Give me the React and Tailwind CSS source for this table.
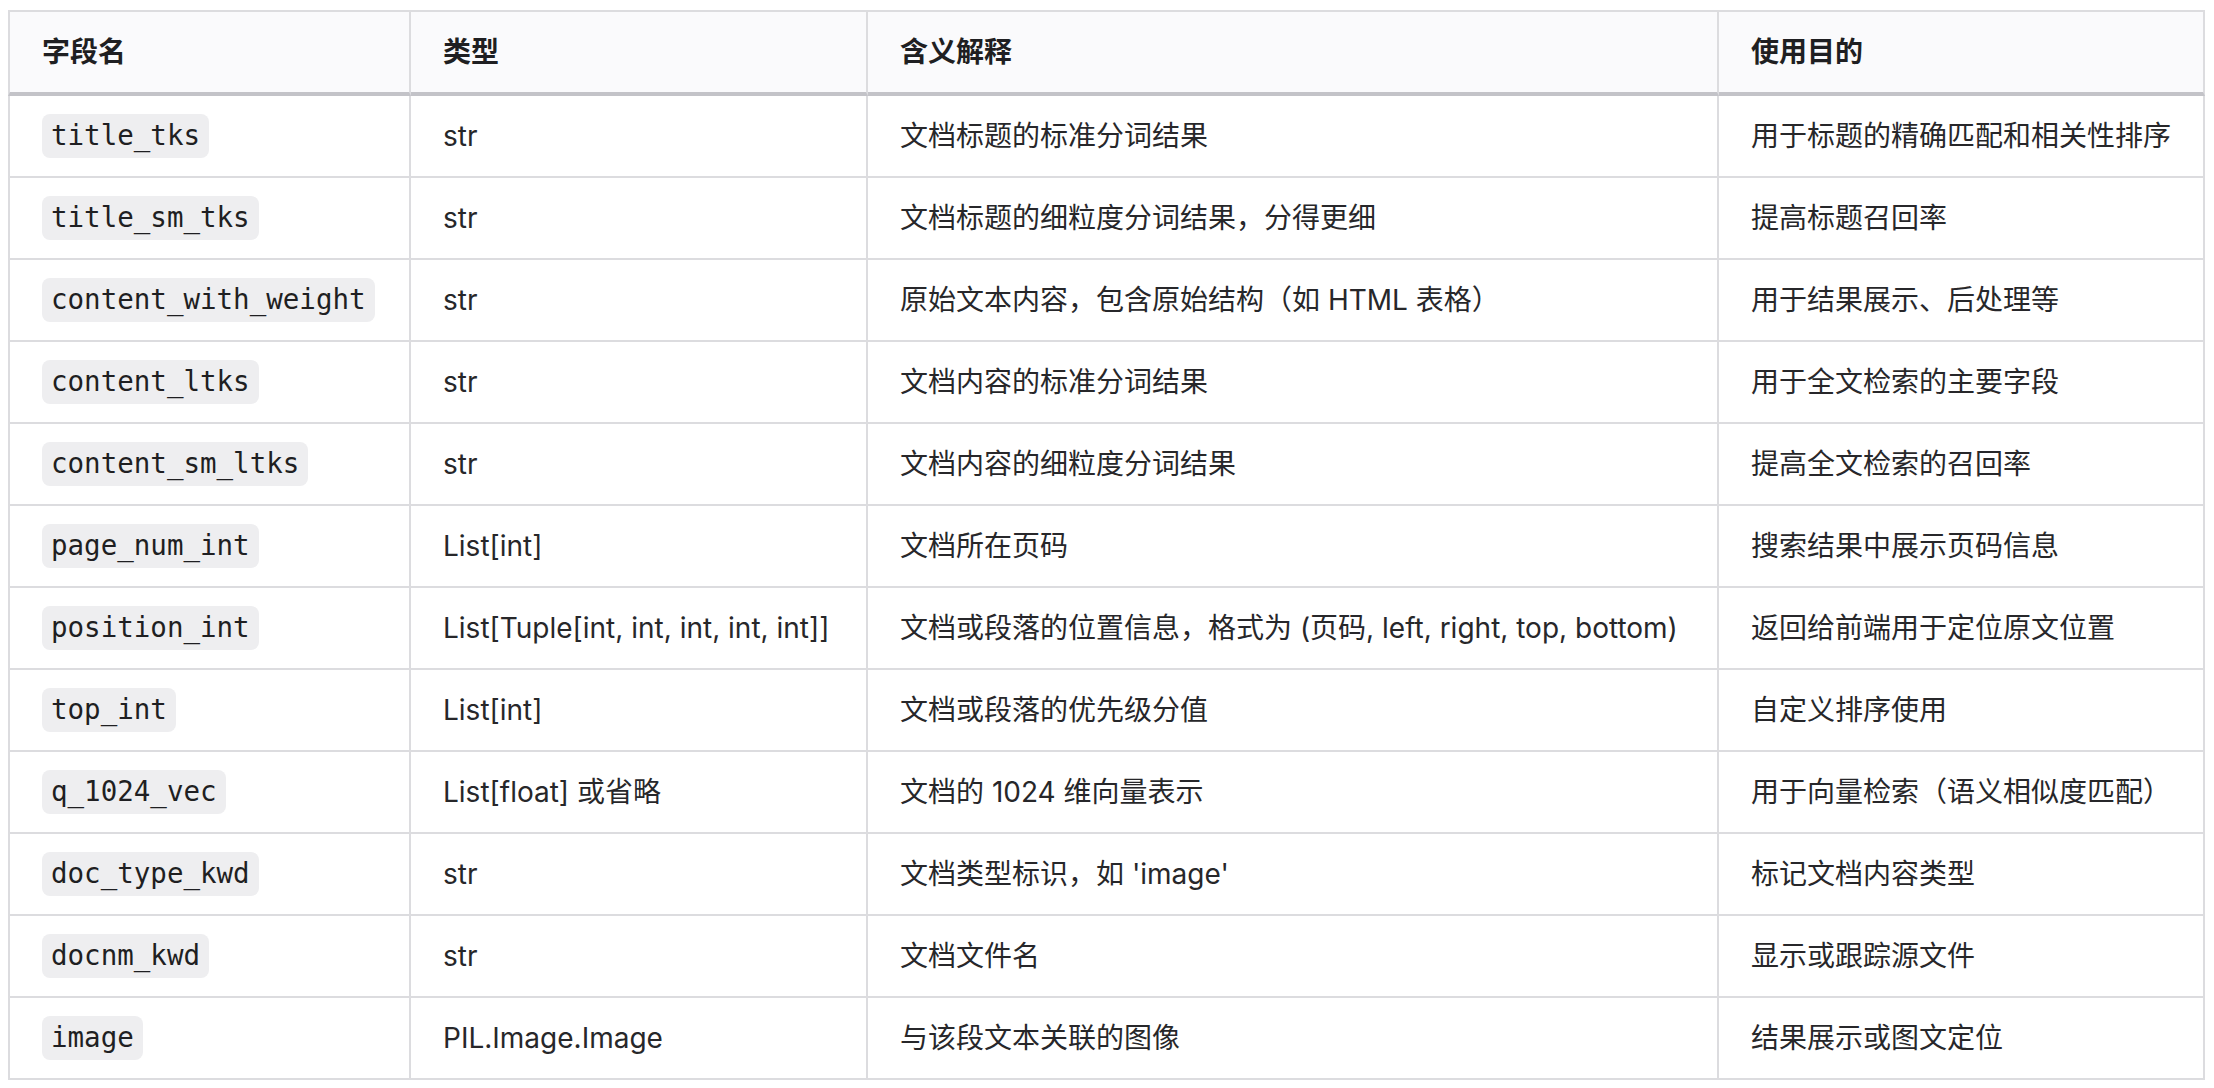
import React from 'react';

const rows = [
  { name: 'title_tks', type: 'str', desc: '文档标题的标准分词结果', use: '用于标题的精确匹配和相关性排序' },
  { name: 'title_sm_tks', type: 'str', desc: '文档标题的细粒度分词结果，分得更细', use: '提高标题召回率' },
  { name: 'content_with_weight', type: 'str', desc: '原始文本内容，包含原始结构（如 HTML 表格）', use: '用于结果展示、后处理等' },
  { name: 'content_ltks', type: 'str', desc: '文档内容的标准分词结果', use: '用于全文检索的主要字段' },
  { name: 'content_sm_ltks', type: 'str', desc: '文档内容的细粒度分词结果', use: '提高全文检索的召回率' },
  { name: 'page_num_int', type: 'List[int]', desc: '文档所在页码', use: '搜索结果中展示页码信息' },
  { name: 'position_int', type: 'List[Tuple[int, int, int, int, int]]', desc: '文档或段落的位置信息，格式为 (页码, left, right, top, bottom)', use: '返回给前端用于定位原文位置' },
  { name: 'top_int', type: 'List[int]', desc: '文档或段落的优先级分值', use: '自定义排序使用' },
  { name: 'q_1024_vec', type: 'List[float] 或省略', desc: '文档的 1024 维向量表示', use: '用于向量检索（语义相似度匹配）' },
  { name: 'doc_type_kwd', type: 'str', desc: "文档类型标识，如 'image'", use: '标记文档内容类型' },
  { name: 'docnm_kwd', type: 'str', desc: '文档文件名', use: '显示或跟踪源文件' },
  { name: 'image', type: 'PIL.Image.Image', desc: '与该段文本关联的图像', use: '结果展示或图文定位' },
];

const headers = ['字段名', '类型', '含义解释', '使用目的'];
const widths = ['w-[403px]', 'w-[457px]', 'w-[851px]', 'w-[486px]'];

const App = () => {
  return (
    <div className="bg-white min-h-screen pl-[8px] pt-[10px] font-['Inter','Noto_Sans_CJK_SC',sans-serif] text-[28px] text-[#27272a]">
      <table className="table-fixed border-separate border-spacing-0 w-[2197px]">
        <thead>
          <tr>
            {headers.map((h, i) => (
              <th
                key={h}
                className={`${widths[i]} h-[86px] bg-[#fafafc] border-t-2 border-r-2 border-b-4 border-t-[#dcdcdf] border-r-[#dcdcdf] border-b-[#c3c3c8] ${i === 0 ? 'border-l-2 border-l-[#dcdcdf]' : ''} px-[32px] text-left font-semibold text-[#1f1f22] align-middle`}
              >
                {h}
              </th>
            ))}
          </tr>
        </thead>
        <tbody>
          {rows.map((r) => (
            <tr key={r.name}>
              <td className="h-[82px] border-l-2 border-r-2 border-b-2 border-[#dcdcdf] px-[32px] align-middle">
                <span className="inline-flex items-center h-[44px] px-[9px] rounded-[8px] bg-[#eeeef0] font-['DejaVu_Sans_Mono',monospace] text-[27.5px] text-[#1f1f22]">
                  {r.name}
                </span>
              </td>
              <td className="h-[82px] border-r-2 border-b-2 border-[#dcdcdf] px-[32px] align-middle whitespace-nowrap">{r.type}</td>
              <td className="h-[82px] border-r-2 border-b-2 border-[#dcdcdf] px-[32px] align-middle whitespace-nowrap">{r.desc}</td>
              <td className="h-[82px] border-r-2 border-b-2 border-[#dcdcdf] px-[32px] align-middle whitespace-nowrap">{r.use}</td>
            </tr>
          ))}
        </tbody>
      </table>
    </div>
  );
};

export default App;
